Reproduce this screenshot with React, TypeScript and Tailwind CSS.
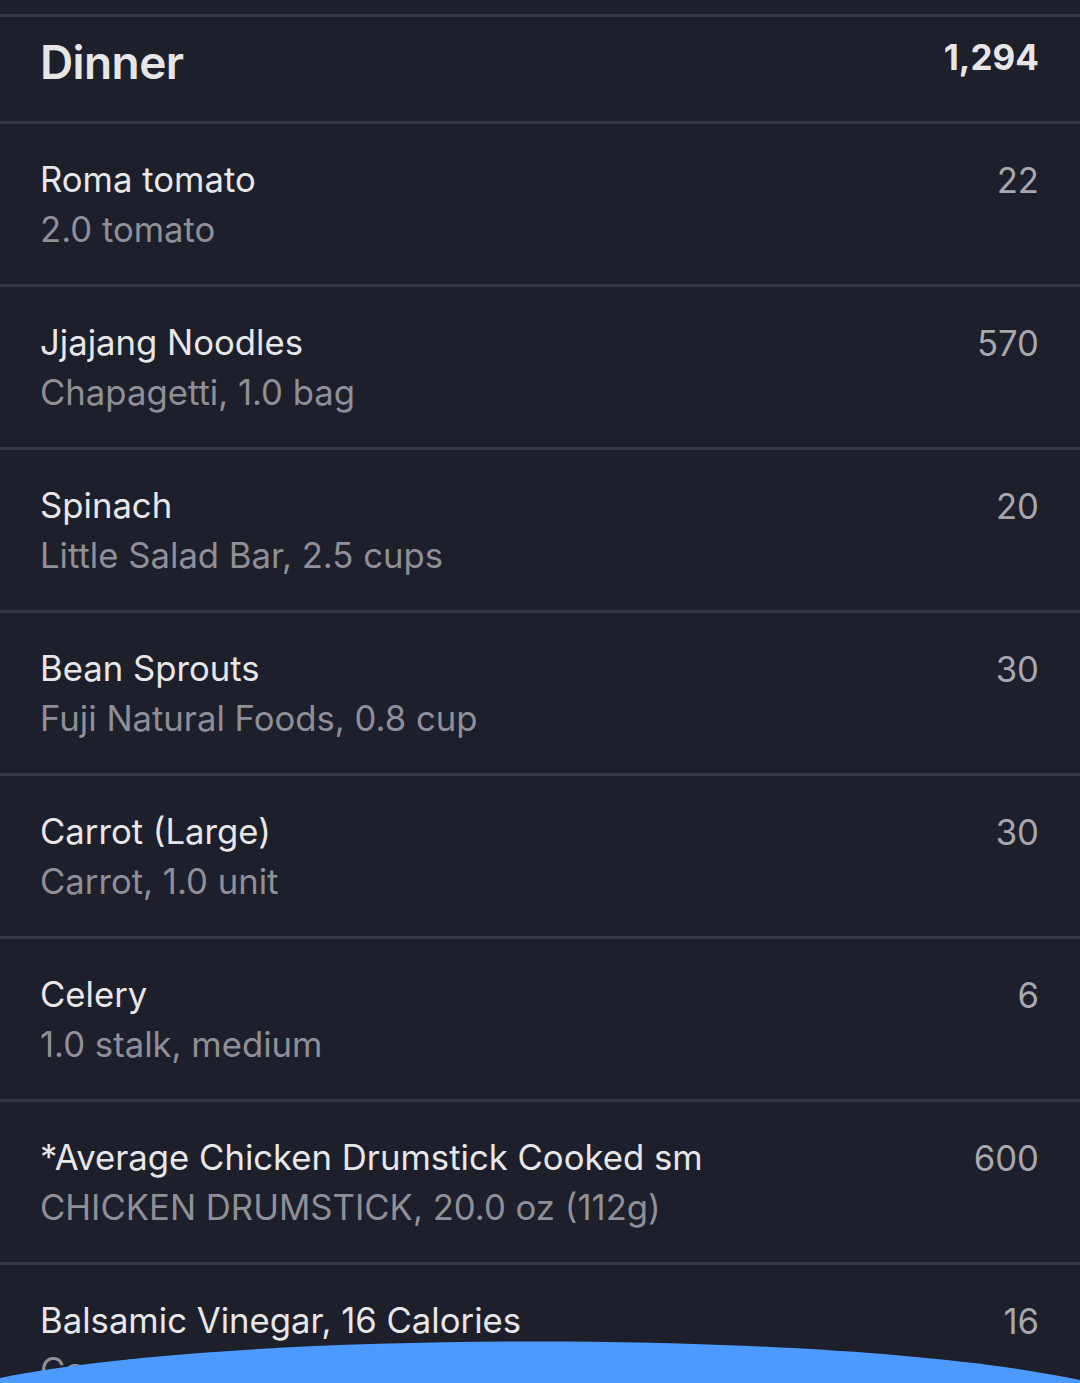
import React from 'react';

interface FoodEntry {
  name: string;
  detail: string;
  calories: string;
}

const entries: FoodEntry[] = [
  { name: 'Roma tomato', detail: '2.0 tomato', calories: '22' },
  { name: 'Jjajang Noodles', detail: 'Chapagetti, 1.0 bag', calories: '570' },
  { name: 'Spinach', detail: 'Little Salad Bar, 2.5 cups', calories: '20' },
  { name: 'Bean Sprouts', detail: 'Fuji Natural Foods, 0.8 cup', calories: '30' },
  { name: 'Carrot (Large)', detail: 'Carrot, 1.0 unit', calories: '30' },
  { name: 'Celery', detail: '1.0 stalk, medium', calories: '6' },
  {
    name: '*Average Chicken Drumstick Cooked sm',
    detail: 'CHICKEN DRUMSTICK, 20.0 oz (112g)',
    calories: '600',
  },
  { name: 'Balsamic Vinegar, 16 Calories', detail: 'Capatriti, 1.0 tbsp', calories: '16' },
];

function EntryRow({ entry }: { entry: FoodEntry }) {
  return (
    <li className="flex h-[163px] items-center justify-between border-b-[3px] border-[#363844] pl-[40px] pr-[41px]">
      <div className="flex flex-col">
        <span className="text-[34.7px] leading-[50px] text-[#e7e7ea]">{entry.name}</span>
        <span className="text-[34.7px] leading-[50px] text-[#8f9097]">{entry.detail}</span>
      </div>
      <span className="self-start pt-[31px] text-[34.7px] leading-[50px] text-[#a7a8ae]">
        {entry.calories}
      </span>
    </li>
  );
}

export default function App() {
  return (
    <div
      className="relative h-[1383px] overflow-hidden bg-[#1d1f2b]"
      style={{ fontFamily: 'Inter, "Noto Sans", sans-serif' }}
    >
      <div className="h-[14px]" />
      <ul className="border-t-[3px] border-[#363844]">
        {/* Meal header */}
        <li className="flex h-[107px] items-start justify-between border-b-[3px] border-[#363844] pl-[40px] pr-[41px] pt-[22px]">
          <span className="text-[46px] font-semibold leading-none tracking-[-0.6px] text-[#e6e6e8]">
            Dinner
          </span>
          <span className="pt-[1px] text-[35px] font-bold leading-none text-[#e6e6e8]">1,294</span>
        </li>
        {entries.map((entry) => (
          <EntryRow key={entry.name} entry={entry} />
        ))}
      </ul>

      {/* Floating button edge */}
      <svg
        className="pointer-events-none absolute bottom-0 left-0"
        width="1080"
        height="42"
        viewBox="0 0 1080 42"
        aria-hidden="true"
      >
        <path d="M0 37 C240 -12 840 -12 1080 39 L1080 42 L0 42 Z" fill="#4c9aff" />
      </svg>
    </div>
  );
}
